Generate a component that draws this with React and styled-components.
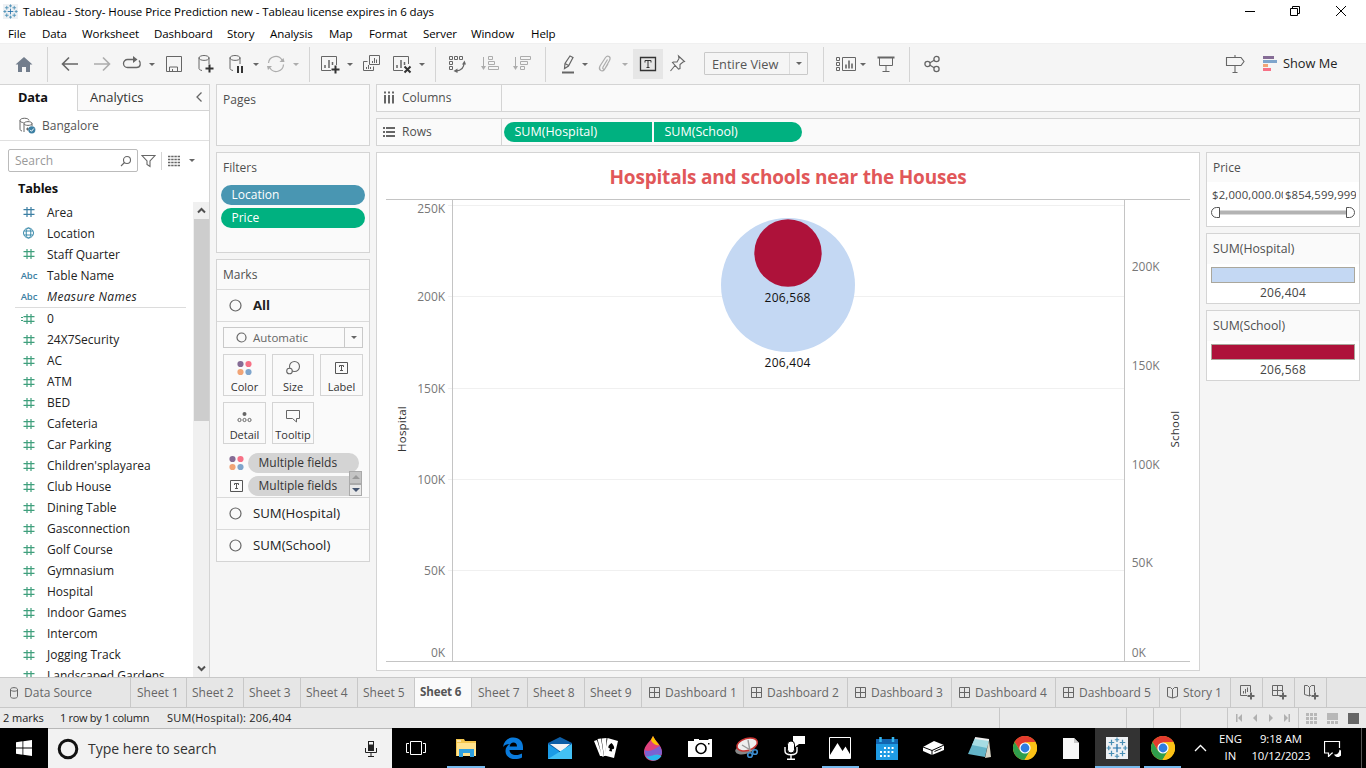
import React from "react";
import styled, { createGlobalStyle, css } from "styled-components";

const Global = createGlobalStyle`
  * { box-sizing: border-box; }
  svg { flex: none; display: block; }
  body { margin: 0; background: #f5f5f5; font-family: "Open Sans", "Noto Sans", sans-serif; font-size: 12px; color: #333; overflow: hidden; }
`;

const Shell = styled.div`
  width: 1366px; height: 768px; display: flex; flex-direction: column; overflow: hidden; white-space: nowrap;
`;

/* ---------- title bar and menu ---------- */
const TitleBar = styled.header`
  height: 24px; flex: none; background: #fff; display: flex; align-items: center; padding: 0 0 2px 3px; color: #000;
  font-size: 11.5px; letter-spacing: -0.085px;
`;
const TitleText = styled.span`margin-left: 5px; flex: 1;`;
const WindowButtons = styled.div`display: flex; width: 139px; align-items: center; height: 20px;`;
const WindowButton = styled.div`width: 45.5px; display: flex; justify-content: center;`;
const MenuBar = styled.nav`
  height: 19px; flex: none; background: #fff; display: flex; align-items: center; padding-left: 8px; color: #000;
  font-size: 11.5px; letter-spacing: -0.08px;
`;
const MenuItem = styled.span`width: ${(p) => p.$w}px;`;

/* ---------- toolbar ---------- */
const Toolbar = styled.div`
  height: 41px; flex: none; background: #f5f5f5; border-top: 1px solid #f0f0f0; display: flex; align-items: center;
`;
const Tool = styled.div`
  margin-left: ${(p) => p.$gap || 0}px; width: ${(p) => p.$w || 20}px; height: 30px; flex: none;
  display: flex; align-items: center; justify-content: center;
  background: ${(p) => (p.$on ? "#e6e6e6" : "transparent")}; opacity: ${(p) => (p.$off ? 0.5 : 1)};
`;
const Sep = styled.div`margin-left: ${(p) => p.$gap}px; width: 1px; height: ${(p) => p.$h || 35}px; background: #d4d4d4; flex: none;`;
const CaretDown = styled.i`
  margin-left: ${(p) => p.$gap || 0}px; width: 0; height: 0; flex: none; opacity: ${(p) => (p.$off ? 0.5 : 1)};
  border: solid transparent; border-width: ${(p) => p.$s || 3}px ${(p) => p.$s || 3}px 0; border-top-color: #666;
`;
const FitSelect = styled.div`
  margin: 0 0 1px 17px; width: 104px; height: 23px; border: 1px solid #c9c9c9; border-radius: 1px; display: flex; align-items: center;
  color: #555; font-size: 12.8px; padding-left: 7px;
`;
const SelectArrow = styled.span`
  margin-left: auto; align-self: stretch; width: 18px; border-left: 1px solid ${(p) => p.$line || "#dcdcdc"};
  display: flex; align-items: center; justify-content: center;
`;
const ToolbarEnd = styled.div`margin-left: auto; display: flex; align-items: center; padding-right: 29px; color: #222; font-size: 12.8px;`;
const ShowMeText = styled.span`width: 54px; margin-left: 6px; padding-bottom: 2px;`;

/* ---------- body ---------- */
const Body = styled.main`height: 593px; flex: none; display: flex; gap: 6px; background: #f5f5f5;`;
const DataPane = styled.aside`
  width: 210px; background: #fff; border-top: 1px solid #d4d4d4; border-right: 1px solid #d4d4d4; display: flex; flex-direction: column;
`;
const PaneTabs = styled.div`display: flex; height: 26px; flex: none; font-size: 13px;`;
const PaneTab = styled.div`
  display: flex; align-items: center; justify-content: space-between; color: #333; padding-bottom: 2px;
  ${(p) => p.$on
    ? css`width: 77px; padding-left: 18px; font-weight: 700; color: #111; font-size: 12.8px; letter-spacing: -0.2px;`
    : css`flex: 1; padding: 0 7px 1px 12px; background: #fafafa; border-left: 1px solid #d4d4d4; border-bottom: 1px solid #d4d4d4;`}
`;
const SourceRow = styled.div`
  height: 30px; flex: none; border-bottom: 1px solid #e0e0e0; display: flex; align-items: center; padding: 0 0 1px 19px; gap: 6px; color: #555;
`;
const SearchRow = styled.div`display: flex; align-items: center; height: 23px; margin: 8px 0 0 8px; flex: none;`;
const SearchBox = styled.div`
  width: 130px; height: 23px; border: 1px solid #bbb; border-radius: 2px; display: flex; align-items: center; justify-content: space-between;
  padding: 0 5px 0 6px; color: #999; font-size: 12px; margin-right: 3px;
`;
const TablesTitle = styled.div`height: 30px; flex: none; padding: 7px 0 0 18px; line-height: 18px; font-size: 12.8px; font-weight: 700; color: #111; letter-spacing: -0.2px;`;
const FieldArea = styled.div`flex: 1; min-height: 0; display: flex; overflow: hidden;`;
const FieldList = styled.div`flex: 1; overflow: hidden; padding-left: 15px;`;
const FieldRow = styled.div`
  height: 21px; display: flex; align-items: center; color: #222; padding-bottom: ${(p) => (p.$up ? 1 : 0)}px;
  font-style: ${(p) => (p.$italic ? "italic" : "normal")}; letter-spacing: ${(p) => (p.$italic ? 0.35 : 0)}px;
`;
const FieldIcon = styled.span`
  width: 28px; margin-right: 4px; display: flex; justify-content: center; font: 600 9.5px "Open Sans", sans-serif;
  color: #3c7fa3; letter-spacing: -0.1px;
`;
const FieldRule = styled.div`height: 1px; background: #dcdcdc; width: 171px;`;
const Scroll = styled.div`width: 16px; background: #f0f0f0; display: flex; flex-direction: column; align-items: center;`;
const ScrollThumb = styled.div`width: 15px; height: 202px; background: #cdcdcd;`;
const ScrollEnd = styled.div`height: 17px; display: flex; align-items: center; margin-top: ${(p) => (p.$last ? "auto" : 0)};`;

const ShelfColumn = styled.section`width: 154px; display: flex; flex-direction: column; gap: 6px;`;
const Card = styled.div`
  border: 1px solid #d4d4d4; background: #fafafa; height: ${(p) => p.$h}px; flex: none; color: #4f4f4f; overflow: hidden;
`;
const CardTitle = styled.div`height: ${(p) => p.$h || 30}px; display: flex; align-items: center; padding: 0 0 1px 6px; font-size: ${(p) => p.$fs || 12}px;`;
const Pill = styled.div`
  height: 20px; width: ${(p) => p.$w}px; background: ${(p) => p.$bg}; color: ${(p) => p.$fg || "#fff"}; font-size: ${(p) => p.$fs || 12}px;
  border-radius: ${(p) => p.$r || "10px"}; padding: 0 0 1px 10.500px; display: flex; align-items: center; flex: none;
`;
const PillStack = styled.div`display: flex; flex-direction: column; gap: 3px; padding: 2px 0 0 4px;`;
const MarkRow = styled.div`
  height: ${(p) => p.$h}px; border-top: 1px solid #dadada; display: flex; align-items: center; padding: 0 0 1px 12px; gap: 11px;
  font-size: 13.2px; color: #222; font-weight: ${(p) => (p.$bold ? 700 : 400)};
`;
const MarkLabel = styled.span`padding-bottom: 1px;`;
const MarkControls = styled.div`border-top: 1px solid #dadada; height: 176px; padding: 5px 6px 0;`;
const MarkType = styled.div`
  height: 21px; width: 140px; border: 1px solid #c9c9c9; display: flex; align-items: center; padding-left: 12px; gap: 6px; color: #666; font-size: 11.5px;
`;
const MarkGrid = styled.div`display: grid; grid-template-columns: 43px 42px 43px; gap: 6px; margin-top: 6px;`;
const MarkButton = styled.div`
  height: 42px; border: 1px solid #d4d4d4; display: flex; flex-direction: column; align-items: center; justify-content: space-between;
  padding: 5px 0 1px; color: #333; font-size: 11px; line-height: 15px;
`;
const AssignedFields = styled.div`display: flex; height: 53px; padding-top: 9px; overflow: hidden;`;
const AssignedList = styled.div`display: flex; flex-direction: column; gap: 3px; width: 127px; overflow: visible; flex: none;`;
const AssignedRow = styled.div`display: flex; align-items: center; padding-left: 6px; gap: 3px; flex: none; width: ${(p) => p.$w}px; overflow: hidden;`;
const Stepper = styled.div`width: 13px; height: 25px; margin: 18px 0 0 -1px; display: flex; flex-direction: column; position: relative; z-index: 1;`;
const StepButton = styled.div`
  height: 12.5px; border: 1px solid #aaa; background: ${(p) => p.$bg}; display: flex; align-items: center; justify-content: center;
`;

const Workspace = styled.section`width: 984px; display: flex; flex-direction: column; gap: 6px;`;
const Shelf = styled.div`height: 28px; flex: none; border: 1px solid #d4d4d4; background: #fafafa; display: flex;`;
const ShelfLabel = styled.div`
  width: 125px; border-right: 1px solid #d4d4d4; display: flex; align-items: center; gap: 7px; padding: 0 0 1px 6px; color: #4f4f4f; font-size: 12px;
`;
const ShelfDrop = styled.div`flex: 1; display: flex; align-items: center; gap: 2px; padding-left: 2px;`;
const ViewRow = styled.div`display: flex; gap: 6px; align-items: flex-start;`;
const ViewFrame = styled.div`width: 824px; height: 519px; border: 1px solid #d4d4d4; background: #fff;`;
const ViewTitle = styled.h1`
  margin: 0; height: 46px; padding-top: 2px; display: flex; align-items: center; justify-content: center; color: #e15759;
  font-size: 19px; font-weight: 700; letter-spacing: -0.2px;
`;
const LegendColumn = styled.div`width: 154px; display: flex; flex-direction: column; gap: 6px;`;
const LegendBody = styled.div`
  background: #fff; height: ${(p) => p.$h}px; padding: ${(p) => p.$top === undefined ? 3 : p.$top}px 4px 0; text-align: center; line-height: 19px; font-size: 12px;
  letter-spacing: 0.25px; color: #444;
`;
const Swatch = styled.div`height: 16px; border: 1px solid #aaa79c; background: ${(p) => p.$c};`;
const RangeValues = styled.div`display: flex; height: 25px; align-items: center; font-size: 11.3px; margin: 0 -1px 0 1px;`;
const RangeLow = styled.span`width: 71px; overflow: hidden; margin-right: 2px; letter-spacing: 0.18px; text-align: left;`;
const RangeHigh = styled.span`flex: 1; overflow: hidden; letter-spacing: 0.12px; text-align: left;`;

/* ---------- sheet tabs and status ---------- */
const SheetTabs = styled.div`height: 31px; flex: none; display: flex; border-top: 1px solid #c8c8c8; border-bottom: 1px solid #c8c8c8; background: #e6e6e6;`;
const SheetTab = styled.div`
  width: ${(p) => p.$w}px; flex: none; border-right: 1px solid #c8c8c8; display: flex; align-items: center; gap: 5px;
  padding-left: ${(p) => (p.$pad === undefined ? 6 : p.$pad)}px; color: #666; font-size: 12px;
  ${(p) => p.$on && css`background: #fafafa; font-weight: 700; color: #555; font-size: 11.6px; letter-spacing: -0.15px; padding-bottom: 2px; padding-left: 5px;`}
`;
const StatusBar = styled.footer`height: 20px; flex: none; background: #eaeaea; display: flex; font-size: 11px; color: #222; align-items: center; padding-left: 3px;`;
const StatusText = styled.span`width: ${(p) => p.$w}px; letter-spacing: ${(p) => p.$ls || 0}px; padding-bottom: 1px;`;
const StatusCell = styled.div`
  width: ${(p) => p.$w}px; align-self: stretch; border-left: 1px solid #c8c8c8; display: flex; align-items: center; justify-content: center;
  gap: 10px; padding-right: ${(p) => p.$pr || 0}px;
`;

/* ---------- taskbar ---------- */
const Taskbar = styled.div`height: 40px; flex: none; background: #000; display: flex; color: #fff;`;
const TaskCell = styled.div`
  width: ${(p) => p.$w}px; flex: none; display: flex; align-items: center; justify-content: center;
`;
const TaskIcon = styled.div`
  width: ${(p) => p.$u || 38}px; height: 40px; display: flex; align-items: center; justify-content: center;
  background: ${(p) => (p.$active ? "#333" : "none")};
  border-bottom: 2px solid ${(p) => (p.$u ? "#76b9ed" : "transparent")}; border-top: 2px solid ${(p) => (p.$active ? "#333" : "transparent")};
`;
const TaskSearch = styled.div`
  width: 344px; background: #f2f2f2; border-top: 1px solid #b8b8b8; display: flex; align-items: center; color: #333; font-size: 14px; padding: 0 15px 0 9px;
`;
const SearchLabel = styled.span`margin-left: 9px; flex: 1; letter-spacing: -0.02px;`;
const Tray = styled.div`flex: 1; display: flex; align-items: center; font-size: 11.3px; line-height: 17.5px; text-align: center;`;
const TrayItem = styled.div`width: ${(p) => p.$w}px; letter-spacing: ${(p) => p.$ls || 0}px; display: flex; flex-direction: column; align-items: center; padding-bottom: ${(p) => p.$up || 0}px;`;
const DesktopEdge = styled.div`margin-left: auto; width: 5px; height: 40px; border-left: 1px solid #555;`;

/* ---------- icons ---------- */
const Svg = ({ w = 20, h = 20, s = "#666", children, sw = 1 }) => (
  <svg width={w} height={h} viewBox={`0 0 ${w} ${h}`} fill="none" stroke={s} strokeWidth={sw}>{children}</svg>
);

const MARK_SPOTS = [[8, 2, 1.6], [8, 14, 1.6], [2, 8, 1.6], [14, 8, 1.6], [4, 4, 2], [12, 4, 2], [4, 12, 2], [12, 12, 2], [8, 8, 3]];
const TableauMark = ({ size }) => (
  <svg width={size} height={size} viewBox="0 0 16 16">
    <rect width="16" height="16" fill="#eef1f4" />
    {MARK_SPOTS.map(([x, y, r], i) => (
      <path key={i} d={`M${x - r} ${y}H${x + r}M${x} ${y - r}V${y + r}`} stroke={i === 8 ? "#1f6fa8" : "#4a8fb5"} strokeWidth="0.9" />
    ))}
  </svg>
);

const Hash = ({ c, calc }) => (
  <Svg w={16} h={12} s={c} sw={1.2}>
    <path d="M6 1v10M10 1v10M2.500 3.700h11M2.500 8.300h11" />
    {calc && <path d="M-1 4.500h3M-1 7.500h3" />}
  </Svg>
);
const Globe = () => (
  <Svg w={12} h={12} s="#3c8bab" sw={1}>
    <circle cx="5.500" cy="6" r="5" /><ellipse cx="5.500" cy="6" rx="2.300" ry="5" /><path d="M1 4h9M1 8h9" />
  </Svg>
);
const Ring = ({ d = 13 }) => <Svg w={d} h={d}><circle cx={d / 2} cy={d / 2} r={d / 2 - 1} strokeWidth="1.200" /></Svg>;
const FourDots = () => (
  <Svg w={16} h={16} s="none">
    <circle cx="3.500" cy="4" r="3.100" fill="#856c95" /><circle cx="11.500" cy="4" r="3.100" fill="#f77186" />
    <circle cx="3.500" cy="12" r="3.100" fill="#f1a476" /><circle cx="11.500" cy="12" r="3.100" fill="#7fa5cc" />
  </Svg>
);
const LetterBox = () => (
  <>
    <path d="M.5.500h12v11H.5z" stroke="#555" />
    <path d="M4.500 5V3.500h4V5M6.500 3.500v5M5 8.500h3" stroke="#555" />
  </>
);
const GridGlyph = ({ plus }) => (
  <Svg w={plus ? 17 : 11} h={plus ? 17 : 11}>
    <path d={plus ? "M9 11.500H1.500V1.500h10V8M6.500 1.500v10M1.500 6.500h10" : "M0.500 0.500h10v10h-10zM5.500 0.500v10M0.500 5.500h10"} />
    {plus && <path d="M12 8.500v7M8.500 12h7" strokeWidth="2" />}
  </Svg>
);
const Book = ({ plus }) => (
  <Svg w={plus ? 17 : 11} h={plus ? 17 : 13}>
    <path d={plus ? "M8 11L6.500 12 1.500 10.500V1.500h3l2 2 2-2h3V8M6.500 3.500V12" : "M5.500 12L.5 10.500V1.500h3l2 2 2-2h3v9zM5.500 3.500V12"} />
    {plus && <path d="M12 8.500v7M8.500 12h7" strokeWidth="2" />}
  </Svg>
);
const ChartPlus = () => (
  <Svg w={17} h={17}>
    <path d="M8 11.500H1.500V1.500h10V8M4.500 9.500V7M6.500 9.500V5M8.500 8V3.500" /><path d="M12 8.500v7M8.500 12h7" strokeWidth="2" />
  </Svg>
);
const Cylinder = () => (
  <Svg w={10} h={12}><path d="M1.500 2.500v7c0 2.300 7 2.300 7 0v-7M1.500 2.500c0-2.500 7-2.500 7 0s-7 2-7 0" /></Svg>
);
const Chrome = () => (
  <svg width="24" height="24" viewBox="0 0 24 24">
    <circle cx="12" cy="12" r="12" fill="#fbc116" />
    <path d="M1.600 6A12 12 0 0 1 22.400 6L12 6.500 7 14.800z" fill="#e33b2e" />
    <path d="M1.600 6A12 12 0 0 0 11.500 24L17 14.800 7 14.800z" fill="#2f9e4c" />
    <path d="M22.400 6A12 12 0 0 1 11.500 24L17 14.800 16 7.500 12 6.300z" fill="#fbc116" />
    <circle cx="12" cy="12" r="5.600" fill="#fff" /><circle cx="12" cy="12" r="4.400" fill="#2f7de1" />
  </svg>
);

const TASKS = [
  { u: 38, icon: <svg width="22" height="20" viewBox="0 0 22 20"><path d="M1 1h8l1 2h11v15H1z" fill="#f3c64f" /><path d="M2 5h19v13H2z" fill="#ffe38f" /><path d="M2 3h4" stroke="#fff" /><path d="M4 19v-8h15v8h-4v-4H8v4z" fill="#2fa0df" /></svg> },
  { icon: <svg width="22" height="22" viewBox="0 0 22 22"><path d="M1 10C2 4 6 0.500 11.500 0.500 17 0.500 21 4.500 21 10v3H7.500c0 3 3 5 6.500 5 2.500 0 4.500-.600 6-1.500v4c-2 1-4.500 1.500-7 1.500C7 22 3.500 18.500 3.500 14c0-3 1.500-5.500 4.500-7C4.500 7 2.500 8 1 10zM7.600 9.500H15C15 7 13.500 5.500 11.500 5.500S8 7 7.600 9.500z" fill="#0a7bdc" /></svg> },
  { icon: <svg width="24" height="22" viewBox="0 0 24 22"><path d="M0 6L12 0l12 6v8H0z" fill="#0d5ea6" /><path d="M2 7h20l-9 8z" fill="#f4f4f4" /><path d="M0 7l12 8L24 7v15H0z" fill="#1b9be6" /><path d="M0 22L24 7v15z" fill="#43c1f5" /></svg> },
  { icon: <svg width="24" height="22" viewBox="0 0 24 22"><path d="M0 4l3-1 5 16-2 0zM3.500 2l3.500-.500 3 18H8z" fill="#fff" /><path d="M7.500 1.500l5-.500-1 18-1.500 0z" fill="#fff" /><path d="M13.500 1L24 4l-4 17-9.500-2.500z" fill="#fff" /><path d="M17.500 6c4 4 3 7 .300 6l.300 2.500-3-.500 1-2.500c-2.500 0-2.500-3 1.400-5.500z" fill="#000" /></svg> },
  { icon: <svg width="20" height="25" viewBox="0 0 20 25"><path d="M10 0c2 5 9 9 9 16 0 5-4 9-9 9s-9-4-9-9C1 9 8 5 10 0z" fill="#e0417d" /><path d="M10 0c2 4 4 6 6 9-3 1-7-2-8-5z" fill="#fdc500" /><path d="M1.500 14c5 3 10-1 15-4 2 3 3 6 2 9-6-3-10 3-16 1z" fill="#7a62d3" /><path d="M2.500 20c6 2 9-4 16 0-3 5-11 7-16 0z" fill="#2bb7ee" /></svg> },
  { icon: <svg width="24" height="20" viewBox="0 0 24 20"><path d="M0 3h6V1h5v1h9l1-1h3v18H0z" fill="#fff" /><circle cx="13" cy="10.500" r="5" fill="#fff" stroke="#000" strokeWidth="1.600" /><rect x="20" y="5" width="1.500" height="1.500" /></svg> },
  { icon: <svg width="26" height="24" viewBox="0 0 26 24"><ellipse cx="11" cy="13" rx="10" ry="5" fill="#888" transform="rotate(-15 11 13)" /><ellipse cx="13" cy="8.500" rx="10.500" ry="6" fill="#eee" stroke="#c93433" strokeWidth="1.500" transform="rotate(-17 13 8)" /><path d="M8 9l10 6M14 4l2 11" stroke="#999" strokeWidth="1.400" /><g fill="none" stroke="#3d8ed1" strokeWidth="1.600"><circle cx="16" cy="19" r="2.300" /><circle cx="21" cy="16" r="2.300" /></g></svg> },
  { icon: <svg width="22" height="24" viewBox="0 0 22 24"><path d="M10 0h12v8h-6l-4 3v-3h-2z" fill="#fff" /><rect x="4.500" y="5" width="7" height="12" rx="3.500" fill="#fff" stroke="#000" /><path d="M2 11v4c0 5 12 5 12 0v-4M8 19v4M4 23.300h8" stroke="#fff" strokeWidth="1.400" fill="none" /></svg> },
  { u: 37, icon: <svg width="22" height="22" viewBox="0 0 22 22"><path d="M.5.500h21v21H.5z" stroke="#fff" fill="#000" /><path d="M1 18L8.500 6l5 8 3-4.500 5 8.500v3H1z" fill="#fff" /></svg> },
  { icon: <svg width="22" height="23" viewBox="0 0 22 23"><rect y="2" width="22" height="21" fill="#1f9be4" /><rect y="2" width="22" height="5" fill="#1165b0" /><path d="M4.500 0v5M17 0v5" stroke="#35b7ef" strokeWidth="2.500" /><path d="M8 11h11M4 15h15M4 19h11" stroke="#fff" strokeWidth="2" strokeDasharray="2 1.800" /></svg> },
  { w: 45.9, icon: <svg width="23" height="16" viewBox="0 0 23 16"><path d="M1 7L12 1l10 4v5l-12 5-9-4z" fill="#fff" /><path d="M1 7l9 3.500L22 5M10 10.500V15M12.500 11.500l7-3" stroke="#000" fill="none" /></svg> },
  { w: 45.9, icon: <svg width="23" height="22" viewBox="0 0 23 22"><path d="M7 1l14 2-4 17L0 17z" fill="#63b4c8" /><path d="M7 1l14 2-2 8-15-3z" fill="#a6dce3" /><path d="M21 3l2 17-6 1z" fill="#d9d6c7" /><path d="M7 1l14 2" stroke="#eee" strokeWidth="2" /></svg> },
  { w: 45.9, icon: <Chrome /> },
  { w: 45.9, icon: <svg width="16" height="21" viewBox="0 0 16 21"><path d="M0 0h11l5 5v16H0z" fill="#f7f7f7" /><path d="M11 0v5h5z" fill="#c9c9c9" /></svg> },
  { w: 45.9, u: 45, active: true, icon: <TableauMark size={22} /> },
  { w: 45.9, u: 37, icon: <Chrome /> },
];

const MENUS = [["File", 34], ["Data", 40], ["Worksheet", 72], ["Dashboard", 73], ["Story", 43], ["Analysis", 59], ["Map", 40], ["Format", 54], ["Server", 48], ["Window", 60], ["Help", 40]];
const DIMENSIONS = [["Area", "hashBlue"], ["Location", "globe"], ["Staff Quarter", "hash"], ["Table Name", "abc"], ["Measure Names", "abc", true]];
const MEASURES = ["24X7Security", "AC", "ATM", "BED", "Cafeteria", "Car Parking", "Children'splayarea", "Club House", "Dining Table", "Gasconnection", "Golf Course", "Gymnasium", "Hospital", "Indoor Games", "Intercom", "Jogging Track", "Landscaped Gardens"];
const SHEETS = [["Sheet 1", 56], ["Sheet 2", 57, 5], ["Sheet 3", 57, 5], ["Sheet 4", 57, 5], ["Sheet 5", 57, 5], ["Sheet 6", 57], ["Sheet 7", 56, 6], ["Sheet 8", 57, 5], ["Sheet 9", 57, 5]];
const DASHBOARDS = [["Dashboard 1", 102], ["Dashboard 2", 104], ["Dashboard 3", 104], ["Dashboard 4", 104], ["Dashboard 5", 104]];

const fieldIcon = (kind) => {
  if (kind === "abc") return "Abc";
  if (kind === "globe") return <Globe />;
  return <Hash c={kind === "hashBlue" ? "#3c7fa3" : "#3f9f7c"} calc={kind === "calc"} />;
};
const Field = ({ name, kind = "hash", italic, up }) => (
  <FieldRow $italic={italic} $up={up}><FieldIcon>{fieldIcon(kind)}</FieldIcon>{name}</FieldRow>
);

const LEFT_TICKS = [["250K", 6, 10], ["200K", 97, 98], ["150K", 189, 190], ["100K", 280, 281], ["50K", 371, 372], ["0K", null, 454]];
const RIGHT_TICKS = [["200K", 68], ["150K", 167], ["100K", 266], ["50K", 364], ["0K", 454]];

const Chart = () => (
  <svg width="822" height="471" viewBox="0 0 822 471" fontSize="12" fill="#787878">
    <g stroke="#f0f0f0">
      {LEFT_TICKS.filter((t) => t[1]).map(([k, y]) => <path key={k} d={`M71 ${y + 0.5}H747`} />)}
    </g>
    <path d="M9 0.500H813M9 462.500H813M75.500 0V462M747.500 0V462" stroke="#c4c4c4" />
    {LEFT_TICKS.map(([k, , y]) => <text key={k} x="68.200" y={y + 4} textAnchor="end">{k}</text>)}
    {RIGHT_TICKS.map(([k, y]) => <text key={k} x="754.700" y={y + 4}>{k}</text>)}
    <circle cx="411" cy="86" r="67" fill="#c4d8f3" />
    <circle cx="411" cy="54" r="33.700" fill="#ae123a" />
    <g fill="#111" textAnchor="middle" letterSpacing="0.250">
      <text x="410.600" y="103">206,568</text>
      <text x="410.600" y="168">206,404</text>
    </g>
    <g fill="#333" textAnchor="middle" fontSize="11.500" letterSpacing="0.200">
      <text transform="translate(29 230) rotate(-90)">Hospital</text>
      <text transform="translate(802 230) rotate(-90)">School</text>
    </g>
  </svg>
);

export default function App() {
  return (
    <Shell>
      <Global />
      <TitleBar>
        <TableauMark size={15} />
        <TitleText>Tableau - Story- House Price Prediction new - Tableau license expires in 6 days</TitleText>
        <WindowButtons>
          <WindowButton><Svg w={10} h={10} s="#000"><path d="M0 5.500h10" /></Svg></WindowButton>
          <WindowButton><Svg w={10} h={10} s="#000"><path d="M.5 2.500h7v7h-7zM2.500 2.500v-2h7v7h-2" /></Svg></WindowButton>
          <WindowButton><Svg w={10} h={10} s="#000"><path d="M0 0l10 10M10 0L0 10" /></Svg></WindowButton>
        </WindowButtons>
      </TitleBar>
      <MenuBar>{MENUS.map(([m, w]) => <MenuItem key={m} $w={w}>{m}</MenuItem>)}</MenuBar>

      <Toolbar>
        <Tool $gap={14}><Svg s="none"><path d="M10 3l8.500 7.500H16V18h-4v-5H8v5H4v-7.500H1.500z" fill="#727d8c" /></Svg></Tool>
        <Sep $gap={13} />
        <Tool $gap={12}><Svg sw={1.6}><path d="M18 10H3M9 3.500L2.500 10 9 16.500" /></Svg></Tool>
        <Tool $gap={12} $off><Svg sw={1.6}><path d="M2 10h15M11 3.500l6.500 6.500-6.500 6.500" /></Svg></Tool>
        <Tool $gap={10}><Svg sw={1.3}><path d="M12 5.500H5.500a4 4 0 0 0 0 8h9c4.500 0 4.500-5 2.500-7" /><path d="M11 2l4.500 3.500L11 9z" fill="#666" stroke="none" /></Svg></Tool>
        <CaretDown $gap={7} />
        <Tool $gap={9}><Svg><path d="M2.500 2.500h15v15h-15zM5.500 17v-4h8v4M8.500 15v2" /></Svg></Tool>
        <Tool $gap={12}><Svg><path d="M6 16.500c-2-.500-3-1-3-2v-11M13 3.500V10M3 4c0-3.300 10-3.300 10 0s-10 3-10 0" /><path d="M13.500 10.500v8M9.500 14.500h8" strokeWidth="2" stroke="#333" /></Svg></Tool>
        <Tool $gap={10}><Svg><path d="M7 16.500c-2-.500-3-1-3-2v-11M14 3.500V10M4 4c0-3.300 10-3.300 10 0s-10 3-10 0" /><path d="M12 12v7M16 12v7" strokeWidth="2" stroke="#333" /></Svg></Tool>
        <CaretDown $gap={7} />
        <Tool $gap={7} $off><Svg sw={1.2}><path d="M2.500 9A7.300 7.300 0 0 1 16 6M17.500 10.500A7.300 7.300 0 0 1 4 14" /><path d="M18.500 8h-5l4-4zM1 12h5l-4 4z" fill="#666" stroke="none" /></Svg></Tool>
        <CaretDown $gap={7} $off />
        <Sep $gap={10} />
        <Tool $gap={10}><Svg><path d="M11 16.500H1.500v-14h15V11" /><path d="M5 14v-3M9 14V6M12.500 11V8" strokeWidth="1.500" /><path d="M15.500 11.500v8M11.500 15.500h8" strokeWidth="2" stroke="#333" /></Svg></Tool>
        <CaretDown $gap={7} />
        <Tool $gap={9}><Svg><path d="M7.500 1.500h10v9h-10zM5.500 7.500h-4v9h10v-4" /><path d="M10.500 9V7M12.500 9V4M14.500 9V5.500M4.500 15v-2M6.500 15v-4M8.500 15v-2" /></Svg></Tool>
        <Tool $gap={10}><Svg><path d="M11 16.500H1.500v-14h15V10" /><path d="M5 14v-3M9 14V6M12.500 11V8" strokeWidth="1.500" /><path d="M12.500 12.500l6 6M18.500 12.500l-6 6" strokeWidth="2" stroke="#333" /></Svg></Tool>
        <CaretDown $gap={7} />
        <Sep $gap={10} />
        <Tool $gap={11}><Svg><path d="M2.500 2.500h3v3h-3zM7.500 2.500h3v3h-3zM12.500 2.500h3v3h-3zM2.500 7.500h3v3h-3zM2.500 12.500h3v3h-3z" /><path d="M17 9c0 4-2.500 7.500-8 8" strokeWidth="1.300" /><path d="M17.500 6.500l1.500 4h-4zM6.500 17l4-2.500v4.500z" fill="#666" stroke="none" /></Svg></Tool>
        <Tool $gap={13} $off><Svg><path d="M3.500 3v12M8.500 2.500h4v3h-4zM8.500 7.500h6v3h-6zM8.500 12.500h10v3h-10z" /><path d="M1 12h5l-2.500 4z" fill="#666" stroke="none" /></Svg></Tool>
        <Tool $gap={12} $off><Svg><path d="M3.500 3v12M8.500 2.500h10v3h-10zM8.500 7.500h7v3h-7zM8.500 12.500h4v3h-4z" /><path d="M1 12h5l-2.500 4z" fill="#666" stroke="none" /></Svg></Tool>
        <Sep $gap={13} />
        <Tool $gap={12}><Svg sw={1.2}><path d="M12 2l3 1.500-4.500 8.500-4 2.500.500-5zM7 9.500l3.500 2" /><path d="M4 18.500h12" strokeWidth="2" /></Svg></Tool>
        <CaretDown $gap={4} />
        <Tool $gap={7} $off><Svg sw={1.2}><path d="M12.500 5.500L8 13c-1 2 1 3 2 1.500l4.500-8c2-4-2-5.500-4-3L5 12c-2 4 2 6.500 4.500 3.500L13 10" /></Svg></Tool>
        <CaretDown $gap={7} $off />
        <Tool $gap={5} $w={30} $on>
          <Svg w={18} h={16} s="#333" sw={1}><path d="M1.500 1.500h15v13h-15z" strokeWidth="1.300" /><path d="M6 6.500V4.500h6v2M9 4.500v7M7.500 11.500h3" /></Svg>
        </Tool>
        <Tool $gap={4}><Svg sw={1.1}><path d="M11.500 2l6 5.500-1.500.500-3 2.500v4l-1.500.500-6-6.500 1-.500h3.500L12 4.500zM8 11.500L3.500 17" /></Svg></Tool>
        <FitSelect>Entire View<SelectArrow><CaretDown $s={3.5} /></SelectArrow></FitSelect>
        <Sep $gap={15} />
        <Tool $gap={12} $w={20}><Svg><path d="M.5 3.500h3v3h-3zM.5 8.500h3v3h-3zM.5 13.500h3v3h-3zM6.500 3.500h13v13h-13z" /><path d="M10 14.500v-4M13 14.500v-8M16 14.500v-5" strokeWidth="1.600" /></Svg></Tool>
        <CaretDown $gap={4} />
        <Tool $gap={10}><Svg><path d="M3.500 3.500v8h13v-8M10 11.500v5.500M6.500 17.500h7" /><path d="M1.500 3.500h17" strokeWidth="2" /></Svg></Tool>
        <Sep $gap={13} />
        <Tool $gap={12}><Svg sw={1.3}><circle cx="5.500" cy="10" r="2.600" /><circle cx="14.500" cy="5" r="2.600" /><circle cx="14.500" cy="15" r="2.600" /><path d="M8 8.700l4.200-2.400M8 11.300l4.200 2.400" /></Svg></Tool>
        <ToolbarEnd>
          <Svg sw={1.1}><path d="M1.500 3.500H16l3 4-3 4H1.500zM10 1v2.500M10 11.500V18M7.500 18.500h5" /></Svg>
          <Tool $gap={18} $w={14}>
            <Svg w={14} h={17} s="none"><path d="M0 0h11v3H0z" fill="#856c95" /><path d="M0 4h14v3H0z" fill="#7fa5cc" /><path d="M0 8h5v3H0z" fill="#f1a476" /><path d="M0 12h8v3H0z" fill="#f77186" /></Svg>
          </Tool>
          <ShowMeText>Show Me</ShowMeText>
        </ToolbarEnd>
      </Toolbar>

      <Body>
        <DataPane>
          <PaneTabs>
            <PaneTab $on>Data</PaneTab>
            <PaneTab>Analytics<Svg w={6} h={10} sw={1.3}><path d="M5.500 0.500L1 5l4.500 4.500" /></Svg></PaneTab>
          </PaneTabs>
          <SourceRow>
            <Svg w={17} h={17}><path d="M3 14c-1.500-.500-2-1-2-2V3.500M1 3.500c0-3 9-3 9 0M1 3.500C1 5 3 5.500 4.500 5.500M5 6.500c0-2.500 8-2.500 8 0s-8 2.500-8 0V15M13 6.500V9M7 12h3M8.500 10.500v3" /><circle cx="12.800" cy="12.800" r="3.600" fill="#3c7fa3" stroke="none" /><path d="M11 12.800l1.500 1.500 2.300-2.800" stroke="#fff" /></Svg>
            Bangalore
          </SourceRow>
          <SearchRow>
            <SearchBox>Search<Svg w={12} h={12} sw={1.1}><circle cx="7" cy="5" r="3.500" /><path d="M4.500 7.500L1 11" /></Svg></SearchBox>
            <Svg w={15} h={14} sw={1.1}><path d="M1 1.500h13L9 7v5.500l-3-2V7z" /></Svg>
            <Sep $gap={5} $h={18} />
            <Svg w={24} h={12}><path d="M6 1.500h12M6 4.500h12M6 7.500h12M6 10.500h12" strokeDasharray="2.400 0.800" strokeWidth="1.400" /></Svg>
            <CaretDown $gap={3} $s={3.5} />
          </SearchRow>
          <TablesTitle>Tables</TablesTitle>
          <FieldArea>
            <FieldList>
              {DIMENSIONS.map(([n, k, it]) => <Field key={n} name={n} kind={k} italic={it} up />)}
              <FieldRule />
              <Field name="0" kind="calc" />
              {MEASURES.map((n) => <Field key={n} name={n} />)}
            </FieldList>
            <Scroll>
              <ScrollEnd><Svg w={9} h={7} s="#505050" sw={2}><path d="M1 5.500L4.500 2 8 5.500" /></Svg></ScrollEnd>
              <ScrollThumb />
              <ScrollEnd $last><Svg w={9} h={7} s="#505050" sw={2}><path d="M1 1.500L4.500 5 8 1.500" /></Svg></ScrollEnd>
            </Scroll>
          </FieldArea>
        </DataPane>

        <ShelfColumn>
          <Card $h={62}><CardTitle>Pages</CardTitle></Card>
          <Card $h={101}>
            <CardTitle>Filters</CardTitle>
            <PillStack>
              <Pill $w={144} $bg="#4996b2">Location</Pill>
              <Pill $w={144} $bg="#00b180">Price</Pill>
            </PillStack>
          </Card>
          <Card $h={303}>
            <CardTitle $h={29}>Marks</CardTitle>
            <MarkRow $h={32} $bold><Ring /><MarkLabel>All</MarkLabel></MarkRow>
            <MarkControls>
              <MarkType><Ring d={11} />Automatic<SelectArrow $line="#c9c9c9"><CaretDown $s={3.5} /></SelectArrow></MarkType>
              <MarkGrid>
                <MarkButton><FourDots />Color</MarkButton>
                <MarkButton><Svg w={16} h={16} sw={1.1}><circle cx="9.500" cy="6.500" r="5" /><circle cx="4.500" cy="11" r="2.800" fill="#fafafa" /></Svg>Size</MarkButton>
                <MarkButton><Svg w={14} h={16}><g transform="translate(0 2)"><LetterBox /></g></Svg>Label</MarkButton>
                <MarkButton><Svg w={16} h={16}><circle cx="7.500" cy="6" r="2" fill="#666" stroke="none" /><circle cx="2.500" cy="12" r="1.600" /><circle cx="7.500" cy="12" r="1.600" /><circle cx="12.500" cy="12" r="1.600" /></Svg>Detail</MarkButton>
                <MarkButton><Svg w={16} h={16}><path d="M1.500 2.500h13v8h-3v3.500l-4-3.500h-6z" /></Svg>Tooltip</MarkButton>
              </MarkGrid>
              <AssignedFields>
                <AssignedList>
                  <AssignedRow $w={137}><FourDots /><Pill $w={111} $bg="#d4d4d4" $fg="#333">Multiple fields</Pill></AssignedRow>
                  <AssignedRow $w={127}><Svg w={16} h={12}><g transform="translate(1 0)"><LetterBox /></g></Svg><Pill $w={111} $bg="#d4d4d4" $fg="#333">Multiple fields</Pill></AssignedRow>
                </AssignedList>
                <Stepper>
                  <StepButton $bg="#c4c4c4"><Svg w={8} h={4} s="none"><path d="M0 4l4-4 4 4z" fill="#999" /></Svg></StepButton>
                  <StepButton $bg="#e8e8e8"><Svg w={8} h={4} s="none"><path d="M0 0l4 4 4-4z" fill="#455570" /></Svg></StepButton>
                </Stepper>
              </AssignedFields>
            </MarkControls>
            <MarkRow $h={32}><Ring /><MarkLabel>SUM(Hospital)</MarkLabel></MarkRow>
            <MarkRow $h={32}><Ring /><MarkLabel>SUM(School)</MarkLabel></MarkRow>
          </Card>
        </ShelfColumn>

        <Workspace>
          <Shelf>
            <ShelfLabel><Svg w={12} h={13} sw={2}><path d="M2 4v8.500M6 4v8.500M10 4v8.500M2 .5v2M6 .5v2M10 .5v2" /></Svg>Columns</ShelfLabel>
            <ShelfDrop />
          </Shelf>
          <Shelf>
            <ShelfLabel><Svg w={12} h={12} sw={2}><path d="M0 2h2M3 2h9M0 6h2M3 6h9M0 10h2M3 10h9" /></Svg>Rows</ShelfLabel>
            <ShelfDrop>
              <Pill $w={148} $bg="#00b180" $r="10px 0 0 10px" $fs={12.5}>SUM(Hospital)</Pill>
              <Pill $w={148} $bg="#00b180" $r="0 10px 10px 0" $fs={12.5}>SUM(School)</Pill>
            </ShelfDrop>
          </Shelf>
          <ViewRow>
            <ViewFrame>
              <ViewTitle>Hospitals and schools near the Houses</ViewTitle>
              <Chart />
            </ViewFrame>
            <LegendColumn>
              <Card $h={75}>
                <CardTitle $h={29}>Price</CardTitle>
                <LegendBody $h={44} $top={0}>
                  <RangeValues><RangeLow>$2,000,000.00</RangeLow><RangeHigh>$854,599,999</RangeHigh></RangeValues>
                  <Svg w={144} h={12} s="#555"><path d="M9 5.500h126" stroke="#b3b3b3" strokeWidth="4" /><path d="M8.500.500H5.500a5 5 0 0 0 0 10h3zM135.500.500h3a5 5 0 0 1 0 10h-3z" fill="#fff" /></Svg>
                </LegendBody>
              </Card>
              <Card $h={71}>
                <CardTitle $h={30} $fs={12.3}>SUM(Hospital)</CardTitle>
                <LegendBody $h={40}><Swatch $c="#c4d8f3" />206,404</LegendBody>
              </Card>
              <Card $h={71}>
                <CardTitle $h={30} $fs={12.3}>SUM(School)</CardTitle>
                <LegendBody $h={40}><Swatch $c="#ae123a" />206,568</LegendBody>
              </Card>
            </LegendColumn>
          </ViewRow>
        </Workspace>
      </Body>

      <SheetTabs>
        <SheetTab $w={131} $pad={9}><Cylinder />Data Source</SheetTab>
        {SHEETS.map(([n, w, pad]) => <SheetTab key={n} $w={w} $pad={pad} $on={n === "Sheet 6"}>{n}</SheetTab>)}
        {DASHBOARDS.map(([n, w]) => <SheetTab key={n} $w={w} $pad={7}><GridGlyph />{n}</SheetTab>)}
        <SheetTab $w={71} $pad={7}><Book />Story 1</SheetTab>
        <SheetTab $w={32} $pad={8}><ChartPlus /></SheetTab>
        <SheetTab $w={32} $pad={8}><GridGlyph plus /></SheetTab>
        <SheetTab $w={32} $pad={8}><Book plus /></SheetTab>
      </SheetTabs>
      <StatusBar>
        <StatusText $w={57} $ls={-0.05}>2 marks</StatusText>
        <StatusText $w={107} $ls={-0.3}>1 row by 1 column</StatusText>
        <StatusText $w={832} $ls={0.25}>SUM(Hospital): 206,404</StatusText>
        <StatusCell $w={127} /><StatusCell $w={27} /><StatusCell $w={27} /><StatusCell $w={47} />
        <StatusCell $w={71}>
          <Svg w={6} h={8} s="none"><path d="M0 0h1.500v8H0zM6 0v8L2 4z" fill="#b0b0b0" /></Svg>
          <Svg w={6} h={8} s="none"><path d="M5 0v8L1 4z" fill="#b0b0b0" /></Svg>
          <Svg w={6} h={8} s="none"><path d="M1 0v8l4-4z" fill="#b0b0b0" /></Svg>
          <Svg w={6} h={8} s="none"><path d="M4.500 0H6v8H4.500zM0 0v8l4-4z" fill="#b0b0b0" /></Svg>
        </StatusCell>
        <StatusCell $w={68}>
          <Svg w={11} h={11} sw={3} s="#b8b8b8"><path d="M0 1.500h11M0 5.500h11M0 9.500h11" strokeDasharray="3 1" /></Svg>
          <Svg w={11} h={11} s="none"><path d="M0 0h11v7H0zM0 8h3v3H0zM4 8h3v3H4zM8 8h3v3H8z" fill="#b8b8b8" /></Svg>
          <Svg w={11} h={11} s="none"><path d="M0 0h11v11H0z" fill="#666" /></Svg>
        </StatusCell>
      </StatusBar>

      <Taskbar>
        <TaskCell $w={48}><Svg w={16} h={16} s="none"><path d="M0 2.200L6.500 1.300V7.600H0zM7.300 1.200L16 0V7.600H7.300zM0 8.400H6.500V14.700L0 13.800zM7.300 8.400H16V16L7.300 14.800z" fill="#fff" /></Svg></TaskCell>
        <TaskSearch>
          <Svg w={22} h={22} s="#111" sw={3}><circle cx="11" cy="11" r="8.800" /></Svg>
          <SearchLabel>Type here to search</SearchLabel>
          <Svg w={12} h={16} s="#222"><rect x="3.500" y=".5" width="5" height="9" /><path d="M4 4h4v5H4z" fill="#222" /><path d="M.5 7v4.500h11V7M6 12v3.500M3 15.500h6" /></Svg>
        </TaskSearch>
        <TaskCell $w={50.6}><Svg w={22} h={16} s="#fff"><path d="M4.500 1.500h11v13h-11zM3 3.500H.500v9H3M17 3.500h2.500v9H17" /></Svg></TaskCell>
        {TASKS.map((t, i) => <TaskCell key={i} $w={t.w || 46.8}><TaskIcon $u={t.u} $active={t.active}>{t.icon}</TaskIcon></TaskCell>)}
        <Tray>
          <TrayItem $w={29}><Svg w={13} h={8} s="#fff" sw={1.3}><path d="M1 7l5.500-5.500L12 7" /></Svg></TrayItem>
          <TrayItem $w={31} $up={2}><span>ENG</span><span>IN</span></TrayItem>
          <TrayItem $w={70} $ls={-0.1} $up={2}><span>9:18 AM</span><span>10/12/2023</span></TrayItem>
          <TrayItem $w={34}><Svg w={17} h={17} s="#fff" sw={1.2}><path d="M15.500 8V1.500H.500V13h4v3.500L8 13h1" /><path d="M15.500 9.500a4 4 0 1 1-5.500 5c3 .500 5.500-1.500 5.500-5z" fill="#fff" stroke="none" /></Svg></TrayItem>
          <DesktopEdge />
        </Tray>
      </Taskbar>
    </Shell>
  );
}
